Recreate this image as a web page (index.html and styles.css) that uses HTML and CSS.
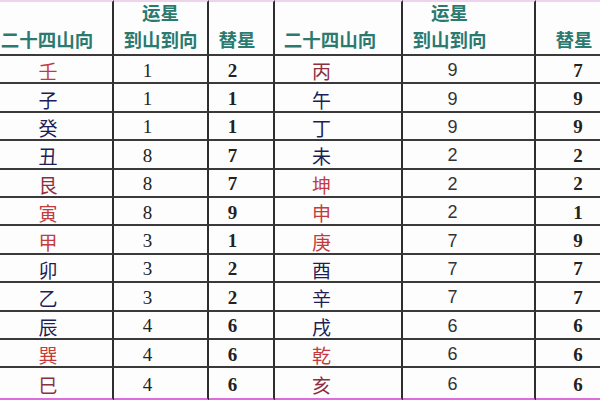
FILE: index.html
```html
<!DOCTYPE html>
<html lang="zh-CN">
<head>
<meta charset="utf-8">
<title>二十四山向 运星 替星</title>
<link rel="stylesheet" href="styles.css">
</head>
<body>
<div class="sheet">
  <div class="cell h h1">二十四山向</div>
  <div class="cell h h2"><span>运星</span><span>到山到向</span></div>
  <div class="cell h h3">替星</div>
  <div class="cell h h4">二十四山向</div>
  <div class="cell h h5"><span>运星</span><span>到山到向</span></div>
  <div class="cell h h6">替星</div>

  <div class="cell c1 r">壬</div><div class="cell c2">1</div><div class="cell c3">2</div><div class="cell c4 m">丙</div><div class="cell c5">9</div><div class="cell c6">7</div>
  <div class="cell c1 n">子</div><div class="cell c2">1</div><div class="cell c3">1</div><div class="cell c4 n">午</div><div class="cell c5">9</div><div class="cell c6">9</div>
  <div class="cell c1 n">癸</div><div class="cell c2">1</div><div class="cell c3">1</div><div class="cell c4 n">丁</div><div class="cell c5">9</div><div class="cell c6">9</div>
  <div class="cell c1 n">丑</div><div class="cell c2">8</div><div class="cell c3">7</div><div class="cell c4 n">未</div><div class="cell c5">2</div><div class="cell c6">2</div>
  <div class="cell c1 m">艮</div><div class="cell c2">8</div><div class="cell c3">7</div><div class="cell c4 r">坤</div><div class="cell c5">2</div><div class="cell c6">2</div>
  <div class="cell c1 r">寅</div><div class="cell c2">8</div><div class="cell c3">9</div><div class="cell c4 r">申</div><div class="cell c5">2</div><div class="cell c6">1</div>
  <div class="cell c1 r">甲</div><div class="cell c2">3</div><div class="cell c3">1</div><div class="cell c4 r">庚</div><div class="cell c5">7</div><div class="cell c6">9</div>
  <div class="cell c1 n">卯</div><div class="cell c2">3</div><div class="cell c3">2</div><div class="cell c4 n">酉</div><div class="cell c5">7</div><div class="cell c6">7</div>
  <div class="cell c1 n">乙</div><div class="cell c2">3</div><div class="cell c3">2</div><div class="cell c4 n">辛</div><div class="cell c5">7</div><div class="cell c6">7</div>
  <div class="cell c1 n">辰</div><div class="cell c2">4</div><div class="cell c3">6</div><div class="cell c4 n">戌</div><div class="cell c5">6</div><div class="cell c6">6</div>
  <div class="cell c1 r">巽</div><div class="cell c2">4</div><div class="cell c3">6</div><div class="cell c4 r">乾</div><div class="cell c5">6</div><div class="cell c6">6</div>
  <div class="cell c1 m last">巳</div><div class="cell c2 last">4</div><div class="cell c3 last">6</div><div class="cell c4 m last">亥</div><div class="cell c5 last">6</div><div class="cell c6 last">6</div>
</div>
</body>
</html>
```
FILE: styles.css
```css
html, body {
  margin: 0;
  padding: 0;
  background: #ffffff;
}
body {
  width: 600px;
  height: 400px;
  overflow: hidden;
}
.sheet {
  display: grid;
  grid-template-columns: 114px 95px 66px 128px 133px 1fr;
  grid-template-rows: 56px repeat(11, 28.4px) 1fr;
  width: 600px;
  height: 398px;
  background: #fefdfe;
  border-bottom: 2px solid #f0c6f0;
}
.cell {
  box-sizing: border-box;
  display: flex;
  align-items: center;
  justify-content: center;
  border-right: 2px solid #2e2e2e;
  border-bottom: 2px solid #3a3a3a;
  font-family: "Liberation Serif", "Noto Sans CJK SC", serif;
  font-size: 19px;
  color: #222222;
  padding-top: 3px;
}
.cell.c6, .cell.h6 {
  border-right: none;
}
.cell.last {
  border-bottom: 3px solid #dd6cdd;
}
/* header */
.h {
  border-top: 2px solid #edd4ec;
  flex-direction: column;
  justify-content: flex-end;
  align-items: center;
  font-family: "Noto Sans CJK SC", sans-serif;
  font-weight: 700;
  font-size: 18.5px;
  line-height: 27px;
  color: #2a7a70;
  padding-top: 0;
  padding-bottom: 1px;
}
.h1 { padding-right: 18px; }
.h3 { padding-right: 8px; }
.h4 { padding-right: 16px; }
.h5 { padding-right: 38px; }
.h6 { padding-left: 12px; }

/* body columns */
.c1, .c4 {
  font-family: "Noto Sans CJK SC", sans-serif;
  font-size: 19px;
  font-weight: 400;
}
.c1 { padding-right: 16px; }
.c2 { padding-right: 26px; }
.c3 { padding-right: 17px; font-weight: 700; }
.c4 { padding-right: 33px; }
.c5 {
  padding-right: 32px;
  font-family: "Liberation Sans", sans-serif;
  font-size: 18px;
  color: #333333;
}
.c6 { padding-left: 20px; font-weight: 700; }

/* character colours */
.r { color: #c33b3b; }
.m { color: #8c3040; }
.n { color: #1e1e56; }
```
